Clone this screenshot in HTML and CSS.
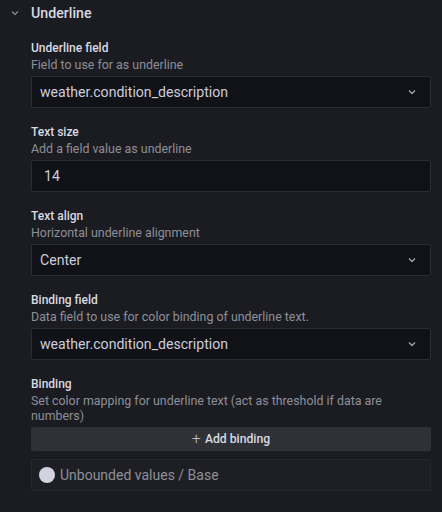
FILE: index.html
```html
<!DOCTYPE html>
<html>
<head>
<meta charset="utf-8">
<link rel="stylesheet" href="styles.css">
</head>
<body>
<div class="section">
  <div class="header">
    <svg class="chev" width="10" height="10" viewBox="0 0 10 10"><path d="M2 3.5 L5 6.5 L8 3.5" fill="none" stroke="#8e8e9a" stroke-width="1.2"/></svg>
    <span class="title">Underline</span>
  </div>
  <div class="content">
    <div class="field">
      <div class="label">Underline field</div>
      <div class="desc">Field to use for as underline</div>
      <div class="input select"><span>weather.condition_description</span><svg width="10" height="10" viewBox="0 0 10 10"><path d="M2 3.5 L5 6.5 L8 3.5" fill="none" stroke="#a0a0ac" stroke-width="1.4"/></svg></div>
    </div>
    <div class="field">
      <div class="label">Text size</div>
      <div class="desc">Add a field value as underline</div>
      <div class="input"><span class="num">14</span></div>
    </div>
    <div class="field">
      <div class="label">Text align</div>
      <div class="desc">Horizontal underline alignment</div>
      <div class="input select"><span>Center</span><svg width="10" height="10" viewBox="0 0 10 10"><path d="M2 3.5 L5 6.5 L8 3.5" fill="none" stroke="#a0a0ac" stroke-width="1.4"/></svg></div>
    </div>
    <div class="field">
      <div class="label">Binding field</div>
      <div class="desc">Data field to use for color binding of underline text.</div>
      <div class="input select"><span>weather.condition_description</span><svg width="10" height="10" viewBox="0 0 10 10"><path d="M2 3.5 L5 6.5 L8 3.5" fill="none" stroke="#a0a0ac" stroke-width="1.4"/></svg></div>
    </div>
    <div class="field">
      <div class="label">Binding</div>
      <div class="desc">Set color mapping for underline text (act as threshold if data are numbers)</div>
      <div class="btn"><span class="plus">+</span> Add binding</div>
      <div class="base"><span class="dot"></span><span>Unbounded values / Base</span></div>
    </div>
  </div>
</div>
</body>
</html>
```

FILE: styles.css
```css
html, body {
  margin: 0;
  padding: 0;
  background: #1b1c21;
  font-family: Roboto, "Noto Sans", sans-serif;
  color: #ccccdc;
}
.section {
  width: 442px;
  height: 512px;
}
.header {
  display: flex;
  align-items: center;
  height: 26px;
}
.chev {
  margin-left: 10px;
  margin-right: 11px;
}
.title {
  font-size: 14.2px;
  font-weight: 500;
  color: #d8d9e3;
}
.content {
  padding: 14px 11px 0 31px;
}
.field {
  margin-bottom: 16px;
}
.label {
  font-size: 12px;
  font-weight: 500;
  line-height: 16px;
  color: #d8d9e3;
}
.desc {
  margin-top: 1px;
  font-size: 12.4px;
  line-height: 15px;
  color: #8e8f99;
}
.input {
  margin-top: 4px;
  height: 32px;
  box-sizing: border-box;
  border: 1px solid #2c2d33;
  border-radius: 2px;
  background: #111217;
  display: flex;
  align-items: center;
  justify-content: space-between;
  padding: 0 13px 0 8px;
  font-size: 14.1px;
  color: #ccccdc;
}
.input .num {
  padding-left: 4px;
}
.btn {
  margin-top: 4px;
  height: 24px;
  border-radius: 2px;
  background: #303137;
  display: flex;
  align-items: center;
  justify-content: center;
  font-size: 12.2px;
  font-weight: 500;
  color: #d8d9e3;
}
.plus {
  font-size: 16px;
  font-weight: 300;
  margin-right: 4px;
  line-height: 1;
  color: #b8b9c4;
}
.base {
  margin-top: 8px;
  height: 32px;
  box-sizing: border-box;
  border: 1px solid #26272c;
  border-radius: 2px;
  background: #1e1f24;
  display: flex;
  align-items: center;
  padding-left: 7px;
  font-size: 14px;
  color: #8e8f99;
}
.dot {
  width: 16px;
  height: 16px;
  border-radius: 50%;
  background: #d3d2e1;
  margin-right: 5px;
}
```
